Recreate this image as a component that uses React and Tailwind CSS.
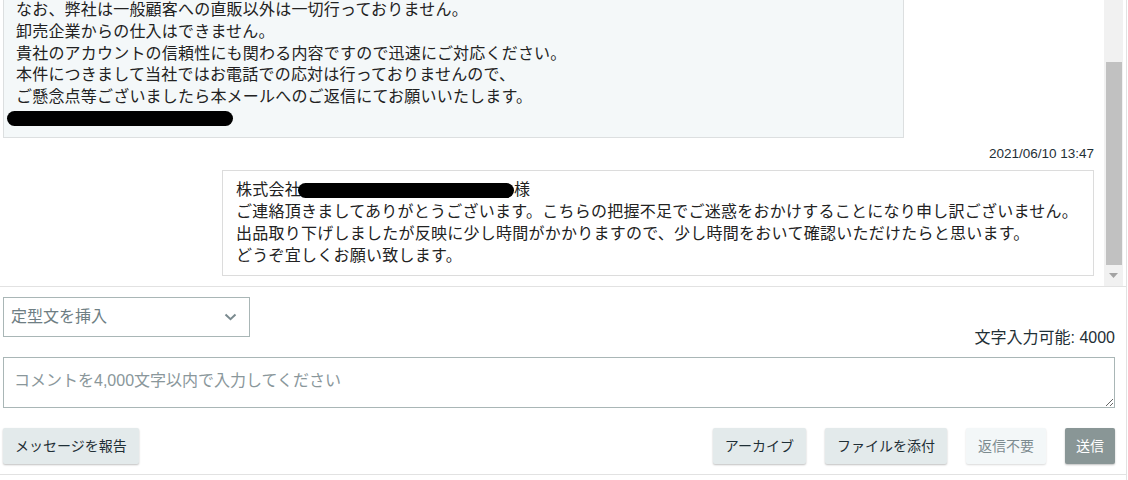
import React from 'react';

const font = { fontFamily: '"Liberation Sans", "Noto Sans CJK JP", sans-serif' };

const Redacted = ({ className }) => (
  <span className={`inline-block bg-black rounded-full align-middle ${className}`} />
);

const ScrollBar = () => (
  <div className="w-[19px] shrink-0 bg-[#f1f1f1] flex flex-col pt-[62px]">
    <div className="ml-[2px] w-[16px] h-[203px] bg-[#c1c1c1]" />
    <div className="flex-1 flex items-center justify-center">
      <svg width="9" height="5" viewBox="0 0 9 5">
        <path d="M0 0 L9 0 L4.5 5 Z" fill="#a3a3a3" />
      </svg>
    </div>
  </div>
);

const Button = ({ children, variant = 'default', className = 'px-3' }) => {
  const styles = {
    default: 'bg-[#e3eaeb] text-[#1f2f36] shadow-[0_1px_2px_rgba(0,0,0,0.25)]',
    muted: 'bg-[#f3f7f8] text-[#7d8b90] shadow-[0_1px_2px_rgba(0,0,0,0.15)]',
    primary: 'bg-[#899696] text-white shadow-[0_1px_2px_rgba(0,0,0,0.25)]',
  };
  return (
    <button className={`h-[36px] rounded-[2px] text-[14px] leading-[20px] ${className} ${styles[variant]}`}>
      {children}
    </button>
  );
};

export default function App() {
  return (
    <div className="w-[1127px] h-[480px] bg-white border-r border-[#e2e2e2] text-[#222]" style={font}>
      {/* Message thread */}
      <div className="flex h-[287px] border-b border-[#e2e2e2]">
        <div className="flex-1 overflow-hidden flex flex-col justify-end pl-[3px] pr-[10px] pb-[10px]">
          <div className="shrink-0 w-[901px] bg-[#f4f8f9] border border-[#dcdfe0] px-3 pt-2 pb-[8px] text-[16px] leading-[21.6px] tracking-[0.2px]">
            <p>なお、弊社は一般顧客への直販以外は一切行っておりません。</p>
            <p>卸売企業からの仕入はできません。</p>
            <p>貴社のアカウントの信頼性にも関わる内容ですので迅速にご対応ください。</p>
            <p>本件につきまして当社ではお電話での応対は行っておりませんので、</p>
            <p>ご懸念点等ございましたら本メールへのご返信にてお願いいたします。</p>
            <div className="h-[21.6px] flex items-center">
              <Redacted className="w-[226px] h-[15px] -ml-[9px]" />
            </div>
          </div>

          <div className="shrink-0 mt-[6px] text-right text-[13.5px] leading-[20px] text-[#1f2f36]">
            2021/06/10 13:47
          </div>

          <div className="shrink-0 mt-[6px] self-end w-[872px] bg-white border border-[#dcdcdc] px-[13px] pt-2 pb-2 text-[16px] leading-[22px] tracking-[0.25px]">
            <p className="flex items-center">
              株式会社
              <Redacted className="w-[216px] h-[15px] -ml-[3px]" />
              様
            </p>
            <p>ご連絡頂きましてありがとうございます。こちらの把握不足でご迷惑をおかけすることになり申し訳ございません。</p>
            <p>出品取り下げしましたが反映に少し時間がかかりますので、少し時間をおいて確認いただけたらと思います。</p>
            <p>どうぞ宜しくお願い致します。</p>
          </div>
        </div>
        <ScrollBar />
        <div className="w-[3px] shrink-0" />
      </div>

      {/* Reply form */}
      <div className="pl-[3px] pr-[11px] pt-[10px] pb-[10px] border-b border-[#e2e2e2]">
        <div className="flex items-start justify-between">
          <div className="w-[247px] h-[40px] border border-[#a9b6b6] flex items-center justify-between pl-[7px] pr-[12px] text-[16px] text-[#6e7e83]">
            <span>定型文を挿入</span>
            <svg width="13" height="8" viewBox="0 0 13 8" fill="none">
              <path d="M1.5 1.5 L6.5 6.2 L11.5 1.5" stroke="#7a8a8f" strokeWidth="2" />
            </svg>
          </div>
          <div className="mt-[30px] text-[16px] leading-[22px] text-[#1f2f36]">文字入力可能: 4000</div>
        </div>

        <textarea
          className="mt-[8px] block w-full h-[51px] border border-[#a9b6b6] pl-[10px] pt-[11px] text-[16px] leading-[24px] outline-none placeholder:text-[#8a979b]"
          placeholder="コメントを4,000文字以内で入力してください"
        />

        <div className="mt-[20px] flex items-center">
          <Button>メッセージを報告</Button>
          <div className="flex-1" />
          <div className="flex items-center gap-[19px]">
            <Button>アーカイブ</Button>
            <Button>ファイルを添付</Button>
            <Button variant="muted">返信不要</Button>
            <Button variant="primary" className="px-[11px]">送信</Button>
          </div>
        </div>
      </div>
    </div>
  );
}
